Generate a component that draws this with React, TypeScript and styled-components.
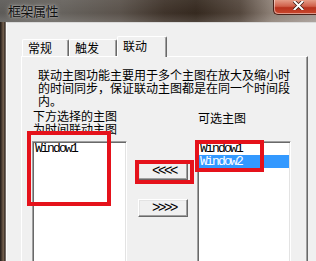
import React from "react";
import styled, { createGlobalStyle } from "styled-components";

const GlobalStyle = createGlobalStyle`
  html, body { margin: 0; padding: 0; background: #f0f0f0; }
  body { font-family: "Noto Sans CJK SC", "Noto Sans", sans-serif; }
  * { box-sizing: border-box; }
`;

const Window = styled.div`
  position: relative;
  width: 316px;
  height: 261px;
  overflow: hidden;
  display: flex;
  flex-direction: column;
  background: #3a3029;
`;

const TitleBar = styled.div`
  flex: none;
  height: 22px;
  display: flex;
  align-items: flex-start;
  background:
    linear-gradient(180deg, rgba(255, 255, 255, 0.06) 0%, rgba(255, 255, 255, 0) 60%, rgba(255, 255, 255, 0.12) 100%),
    linear-gradient(90deg, #5d5b58 0%, #66625d 20%, #5a524b 38%, #3f332a 52%, #35291f 62%, #54473d 76%, #8d8076 86%, #a29892 100%);
`;

const Title = styled.div`
  margin: 3px 0 0 8px;
  font-size: 13px;
  line-height: 16px;
  letter-spacing: -0.5px;
  color: #101010;
  text-shadow: 0 0 5px rgba(255, 255, 255, 0.55), 0 0 2px rgba(255, 255, 255, 0.5);
`;

const CloseButton = styled.div`
  margin-left: auto;
  width: 43px;
  height: 15px;
  display: flex;
  align-items: flex-start;
  padding: 1px 0 0 19px;
  border-left: 1px solid #4a2119;
  border-bottom: 1px solid #4a2119;
  border-bottom-left-radius: 5px;
  background: linear-gradient(180deg, #e49b86 0%, #d0604a 45%, #b8321d 55%, #c9472d 100%);
  box-shadow: inset 1px -1px 0 rgba(255, 255, 255, 0.45);
`;

const Body = styled.div`
  flex: 1;
  display: flex;
  min-height: 0;
`;

const LeftFrame = styled.div`
  flex: none;
  width: 6px;
  background: linear-gradient(90deg, #1f1a17 0%, #4a3c31 30%, #76624f 55%, #3b3029 80%, #9a948f 100%);
`;

const Client = styled.div`
  flex: 1;
  display: flex;
  flex-direction: column;
  background: #f0f0f0;
  border-top: 1px solid #dadada;
  border-left: 1px solid #fbfbfb;
  padding: 13px 0 0 14px;
`;

const TabStrip = styled.div`
  flex: none;
  height: 20px;
  display: flex;
  align-items: flex-end;
  padding-left: 1px;
  position: relative;
  z-index: 1;
`;

const Tab = styled.div<{ $w: number; $active?: boolean }>`
  width: ${(p) => p.$w}px;
  height: ${(p) => (p.$active ? 21 : 17)}px;
  margin-bottom: ${(p) => (p.$active ? -1 : 0)}px;
  padding: ${(p) => (p.$active ? 2 : 1)}px 0 0 5px;
  background: #f0f0f0;
  border-top: 1px solid #ffffff;
  border-left: 1px solid #ffffff;
  border-right: 1px solid #696969;
  border-top-left-radius: 2px;
  border-top-right-radius: 2px;
  box-shadow: inset -1px 0 0 #a0a0a0;
  font-size: 12px;
  line-height: 13px;
  color: #000;
  white-space: nowrap;
`;

const TabPanel = styled.div`
  flex: 1;
  width: 287px;
  background: #f0f0f0;
  border-top: 1px solid #ffffff;
  border-left: 1px solid #ffffff;
  border-right: 1px solid #696969;
  box-shadow: inset -1px 0 0 #a0a0a0;
  padding: 11px 0 0 10px;
`;

const Para = styled.div`
  margin-left: 6px;
  font-size: 12px;
  line-height: 13px;
  color: #000;
  white-space: nowrap;
`;

const Line = styled.span`
  display: block;
`;

const Lower = styled.div`
  margin-top: 2px;
  display: grid;
  grid-template-columns: 95px 70px 94px;
  align-items: start;
`;

const Column = styled.div`
  display: flex;
  flex-direction: column;
`;

const LabelArea = styled.div<{ $offset: number }>`
  height: 32px;
  padding: ${(p) => p.$offset}px 0 0 1px;
  font-size: 12px;
  line-height: 13px;
  color: #000;
  white-space: nowrap;
`;

const ListBox = styled.div`
  height: 130px;
  background: #ffffff;
  border: 1px solid;
  border-color: #a0a0a0 #ffffff #ffffff #a0a0a0;
  box-shadow: inset 1px 1px 0 #696969, inset -1px -1px 0 #e3e3e3;
  padding: 0 1px 0 1px;
`;

const Item = styled.div<{ $selected?: boolean }>`
  height: 13px;
  line-height: 13px;
  padding-left: 1px;
  font-family: "Liberation Mono", monospace;
  font-size: 13px;
  letter-spacing: -1.8px;
  color: ${(p) => (p.$selected ? "#ffffff" : "#000000")};
  background: ${(p) => (p.$selected ? "#3399ff" : "transparent")};
  white-space: nowrap;
`;

const ButtonColumn = styled.div`
  display: flex;
  flex-direction: column;
  gap: 19px;
  padding: 53px 0 0 11px;
`;

const MoveButton = styled.div`
  width: 50px;
  height: 18px;
  display: flex;
  align-items: center;
  justify-content: center;
  background: #f0f0f0;
  border: 1px solid;
  border-color: #ffffff #696969 #696969 #ffffff;
  box-shadow: inset -1px -1px 0 #a0a0a0, inset 1px 1px 0 #e3e3e3;
  font-family: "Liberation Mono", monospace;
  font-size: 14px;
  line-height: 14px;
  letter-spacing: -2.4px;
  color: #000;
  padding-left: 2px;
`;

const Highlight = styled.div<{ $x: number; $y: number; $w: number; $h: number }>`
  position: absolute;
  left: ${(p) => p.$x}px;
  top: ${(p) => p.$y}px;
  width: ${(p) => p.$w}px;
  height: ${(p) => p.$h}px;
  border: 4px solid #e5121b;
  pointer-events: none;
`;

const CloseX = () => (
  <svg width="11" height="9" viewBox="0 0 11 9">
    <path d="M1.5 0.5 L9.5 8.5 M9.5 0.5 L1.5 8.5" stroke="#3a1a12" strokeWidth="3.4" strokeLinecap="square" />
    <path d="M1.5 0.5 L9.5 8.5 M9.5 0.5 L1.5 8.5" stroke="#ffffff" strokeWidth="2" strokeLinecap="square" />
  </svg>
);

export default function App() {
  return (
    <>
      <GlobalStyle />
      <Window>
        <TitleBar>
          <Title>框架属性</Title>
          <CloseButton>
            <CloseX />
          </CloseButton>
        </TitleBar>
        <Body>
          <LeftFrame />
          <Client>
            <TabStrip>
              <Tab $w={47}>常规</Tab>
              <Tab $w={48}>触发</Tab>
              <Tab $w={50} $active>
                联动
              </Tab>
            </TabStrip>
            <TabPanel>
              <Para>
                <Line>联动主图功能主要用于多个主图在放大及缩小时</Line>
                <Line>的时间同步，保证联动主图都是在同一个时间段</Line>
                <Line>内。</Line>
              </Para>
              <Lower>
                <Column>
                  <LabelArea $offset={0}>
                    <Line>下方选择的主图</Line>
                    <Line>为时间联动主图</Line>
                  </LabelArea>
                  <ListBox>
                    <Item>Window1</Item>
                  </ListBox>
                </Column>
                <ButtonColumn>
                  <MoveButton>&lt;&lt;&lt;&lt;</MoveButton>
                  <MoveButton>&gt;&gt;&gt;&gt;</MoveButton>
                </ButtonColumn>
                <Column>
                  <LabelArea $offset={2}>可选主图</LabelArea>
                  <ListBox>
                    <Item>Window1</Item>
                    <Item $selected>Window2</Item>
                  </ListBox>
                </Column>
              </Lower>
            </TabPanel>
          </Client>
        </Body>
        <Highlight $x={27} $y={131} $w={84} $h={75} />
        <Highlight $x={195} $y={140} $w={69} $h={32} />
        <Highlight $x={135} $y={160} $w={59} $h={24} />
      </Window>
    </>
  );
}
